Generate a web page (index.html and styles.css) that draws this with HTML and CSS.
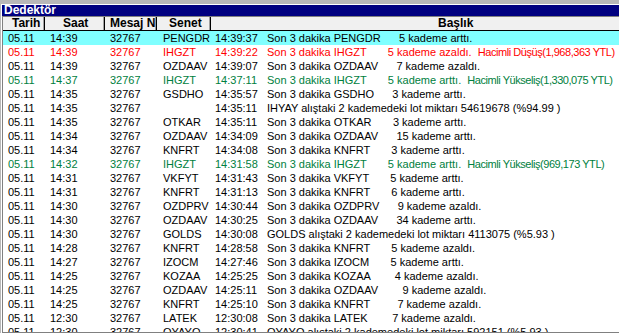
FILE: index.html
```html
<!DOCTYPE html>
<html>
<head>
  <meta charset="UTF-8" />
  <title>Dedektör</title>
  <link rel="stylesheet" href="styles.css">
</head>
<body>

<div class="window">
  <div class="title-bar">Dedektör</div>

  <div class="list">
    <div class="list-head">
      <div class="h-date">Tarih</div>
      <div class="h-time">Saat</div>
      <div class="h-msg">Mesaj N</div>
      <div class="h-sym">Senet</div>
      <div class="h-title">Başlık</div>
    </div>

    <div class="row sel"><span>05.11</span><span>14:39</span><span>32767</span><span class="sym">PENGDR</span><span class="txt"><span class="stamp">14:39:37</span>Son 3 dakika PENGDR      5 kademe arttı.</span></div>
    <div class="row down"><span>05.11</span><span>14:39</span><span>32767</span><span class="sym">IHGZT</span><span class="txt"><span class="stamp">14:39:22</span>Son 3 dakika IHGZT       5 kademe azaldı.  <span class="vol">Hacimli Düşüş(1,968,363 YTL)</span></span></div>
    <div class="row"><span>05.11</span><span>14:39</span><span>32767</span><span class="sym">OZDAAV</span><span class="txt"><span class="stamp">14:39:07</span>Son 3 dakika OZDAAV      7 kademe azaldı.</span></div>
    <div class="row up"><span>05.11</span><span>14:37</span><span>32767</span><span class="sym">IHGZT</span><span class="txt"><span class="stamp">14:37:11</span>Son 3 dakika IHGZT       5 kademe arttı.  <span class="vol">Hacimli Yükseliş(1,330,075 YTL)</span></span></div>
    <div class="row"><span>05.11</span><span>14:35</span><span>32767</span><span class="sym">GSDHO</span><span class="txt"><span class="stamp">14:35:57</span>Son 3 dakika GSDHO      3 kademe arttı.</span></div>
    <div class="row"><span>05.11</span><span>14:35</span><span>32767</span><span class="sym"></span><span class="txt"><span class="stamp">14:35:11</span>IHYAY alıştaki 2 kademedeki lot miktarı 54619678 (%94.99 )</span></div>
    <div class="row"><span>05.11</span><span>14:35</span><span>32767</span><span class="sym">OTKAR</span><span class="txt"><span class="stamp">14:35:11</span>Son 3 dakika OTKAR       3 kademe arttı.</span></div>
    <div class="row"><span>05.11</span><span>14:34</span><span>32767</span><span class="sym">OZDAAV</span><span class="txt"><span class="stamp">14:34:09</span>Son 3 dakika OZDAAV      15 kademe arttı.</span></div>
    <div class="row"><span>05.11</span><span>14:34</span><span>32767</span><span class="sym">KNFRT</span><span class="txt"><span class="stamp">14:34:08</span>Son 3 dakika KNFRT       3 kademe arttı.</span></div>
    <div class="row up"><span>05.11</span><span>14:32</span><span>32767</span><span class="sym">IHGZT</span><span class="txt"><span class="stamp">14:31:58</span>Son 3 dakika IHGZT       5 kademe arttı.  <span class="vol">Hacimli Yükseliş(969,173 YTL)</span></span></div>
    <div class="row"><span>05.11</span><span>14:31</span><span>32767</span><span class="sym">VKFYT</span><span class="txt"><span class="stamp">14:31:43</span>Son 3 dakika VKFYT       5 kademe arttı.</span></div>
    <div class="row"><span>05.11</span><span>14:31</span><span>32767</span><span class="sym">KNFRT</span><span class="txt"><span class="stamp">14:31:13</span>Son 3 dakika KNFRT       6 kademe arttı.</span></div>
    <div class="row"><span>05.11</span><span>14:30</span><span>32767</span><span class="sym">OZDPRV</span><span class="txt"><span class="stamp">14:30:44</span>Son 3 dakika OZDPRV      9 kademe azaldı.</span></div>
    <div class="row"><span>05.11</span><span>14:30</span><span>32767</span><span class="sym">OZDAAV</span><span class="txt"><span class="stamp">14:30:25</span>Son 3 dakika OZDAAV      34 kademe arttı.</span></div>
    <div class="row"><span>05.11</span><span>14:30</span><span>32767</span><span class="sym">GOLDS</span><span class="txt"><span class="stamp">14:30:08</span>GOLDS alıştaki 2 kademedeki lot miktarı 4113075 (%5.93 )</span></div>
    <div class="row"><span>05.11</span><span>14:28</span><span>32767</span><span class="sym">KNFRT</span><span class="txt"><span class="stamp">14:28:58</span>Son 3 dakika KNFRT       5 kademe azaldı.</span></div>
    <div class="row"><span>05.11</span><span>14:27</span><span>32767</span><span class="sym">IZOCM</span><span class="txt"><span class="stamp">14:27:46</span>Son 3 dakika IZOCM       5 kademe arttı.</span></div>
    <div class="row"><span>05.11</span><span>14:25</span><span>32767</span><span class="sym">KOZAA</span><span class="txt"><span class="stamp">14:25:25</span>Son 3 dakika KOZAA        4 kademe azaldı.</span></div>
    <div class="row"><span>05.11</span><span>14:25</span><span>32767</span><span class="sym">OZDAAV</span><span class="txt"><span class="stamp">14:25:11</span>Son 3 dakika OZDAAV        9 kademe azaldı.</span></div>
    <div class="row"><span>05.11</span><span>14:25</span><span>32767</span><span class="sym">KNFRT</span><span class="txt"><span class="stamp">14:25:10</span>Son 3 dakika KNFRT         7 kademe azaldı.</span></div>
    <div class="row"><span>05.11</span><span>12:30</span><span>32767</span><span class="sym">LATEK</span><span class="txt"><span class="stamp">12:30:08</span>Son 3 dakika LATEK        7 kademe azaldı.</span></div>
    <div class="row"><span>05.11</span><span>12:30</span><span>32767</span><span class="sym">OYAYO</span><span class="txt"><span class="stamp">12:30:41</span>OYAYO alıştaki 2 kademedeki lot miktarı 592151 (%5.93 )</span></div>
  </div>
</div>

</body>
</html>
```

FILE: styles.css
```css
body {
  margin: 0;
  background: #b8b8b8;
  font-family: "Liberation Sans", Arial, sans-serif;
  font-size: 11px;
  color: #000;
  overflow: hidden;
}

.window {
  margin: 4px 0 0 1px;
  border-top: 1px solid #fff;
  border-left: 1px solid #fff;
}

.title-bar {
  height: 11px;
  line-height: 11px;
  padding-left: 2px;
  background: #000080;
  color: #fff;
  font-size: 12px;
  font-weight: bold;
  border-bottom: 1px solid #808080;
}

.list {
  height: 315px;
  overflow: hidden;
  background: #fff;
  border-left: 1px solid #808080;
  border-bottom: 1px solid #808080;
}

.list-head,
.row {
  display: grid;
  grid-template-columns: 42px 60px 52px 54px 1fr;
  white-space: nowrap;
}

.list-head {
  height: 13px;
  line-height: 13px;
  background: #f0f0f0;
  border-bottom: 1px solid #000;
  font-size: 12px;
  font-weight: bold;
}

.list-head > div {
  overflow: hidden;
  box-shadow: inset -1px 0 #000, inset -2px 0 #a0a0a0;
}

.list-head .h-title {
  box-shadow: none;
}

.h-date { padding-left: 9px; }
.h-time { padding-left: 18px; }
.h-msg { padding-left: 5px; }
.h-sym { padding-left: 12px; }
.h-title { padding-left: 227px; }

.row {
  height: 14px;
  line-height: 14px;
}

.row > span {
  overflow: hidden;
  padding-left: 5px;
}

.row > .sym {
  padding-left: 6px;
}

.row > .txt {
  padding-left: 4px;
  white-space: pre;
}

.stamp {
  display: inline-block;
  width: 52px;
}

.vol {
  letter-spacing: -0.45px;
}

.row.sel {
  background: #80ffff;
}

.row.down {
  color: #ff0000;
}

.row.up {
  color: #008040;
}
```
